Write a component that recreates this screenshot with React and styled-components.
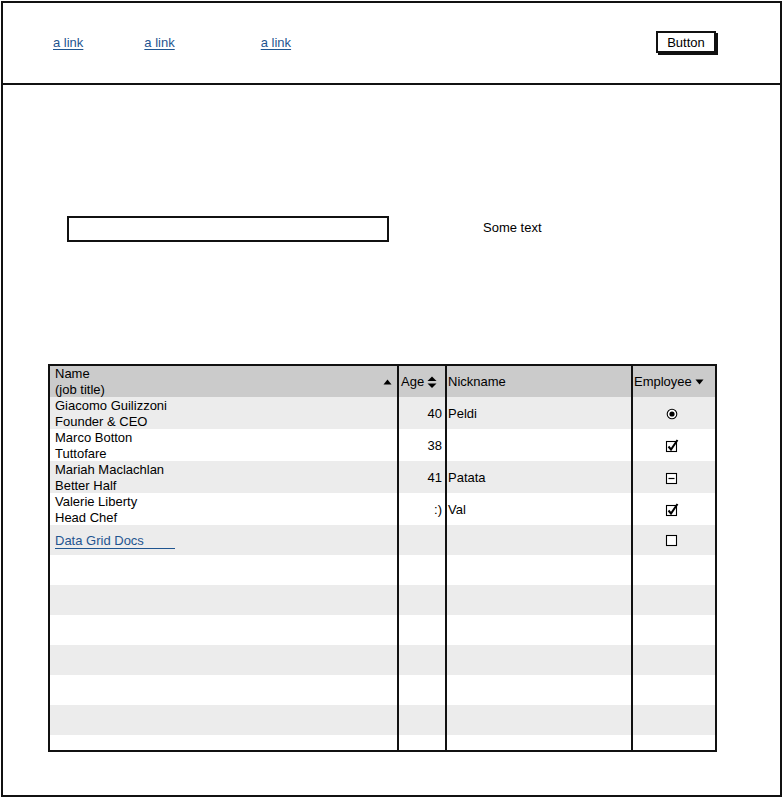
import React from 'react';
import styled, { createGlobalStyle } from 'styled-components';

const GlobalStyle = createGlobalStyle`
  html, body {
    margin: 0;
    padding: 0;
    background: #ffffff;
  }
  body {
    font-family: "Liberation Sans", Arial, sans-serif;
    font-size: 13px;
    color: #000000;
  }
`;

const Frame = styled.div`
  box-sizing: border-box;
  margin: 1px 0 0 1px;
  width: 781px;
  height: 796px;
  border: 2px solid #111111;
  display: flex;
  flex-direction: column;
`;

const TopBar = styled.header`
  box-sizing: border-box;
  height: 82px;
  border-bottom: 2px solid #111111;
  display: flex;
  align-items: center;
  padding: 0 63px 2px 50px;
`;

const NavLink = styled.a`
  color: #1f5590;
  text-decoration: underline;
  text-underline-offset: 2px;
  margin-left: ${p => p.$offset || 0}px;
  cursor: pointer;
`;

const SketchButton = styled.button`
  margin-left: auto;
  box-sizing: border-box;
  width: 60px;
  height: 22px;
  padding: 0;
  border: 2px solid #111111;
  background: #ffffff;
  box-shadow: 2px 2px 0 #111111;
  font-family: "Liberation Sans", Arial, sans-serif;
  font-size: 13px;
  color: #000000;
  margin-right: 1px;
`;

const Body = styled.main`
  display: flex;
  flex-direction: column;
`;

const FormRow = styled.div`
  display: flex;
  align-items: center;
  margin: 131px 0 0 64px;
`;

const TextInput = styled.input`
  box-sizing: border-box;
  width: 322px;
  height: 26px;
  border: 2px solid #111111;
  outline: none;
  background: #ffffff;
`;

const Label = styled.span`
  margin: 0 0 3px 94px;
`;

const Grid = styled.div`
  box-sizing: border-box;
  margin: 122px 0 0 45px;
  width: 669px;
  height: 388px;
  border: 2px solid #111111;
  overflow: hidden;
`;

const Row = styled.div`
  box-sizing: border-box;
  display: grid;
  grid-template-columns: 347px 46px 184px 82px;
  column-gap: 2px;
  height: ${p => p.$h}px;
  background: ${p => p.$bg};
`;

const Cell = styled.div`
  position: relative;
  display: flex;
  align-items: center;
  justify-content: ${p => p.$justify || 'flex-start'};
  padding: ${p => p.$pad || '0'};
  line-height: 16px;
  white-space: nowrap;

  &::after {
    content: '';
    position: absolute;
    top: 0;
    bottom: 0;
    right: -2px;
    width: 2px;
    background: #111111;
  }
  &:last-child::after {
    display: none;
  }
`;

const Stack = styled.div`
  display: flex;
  flex-direction: column;
`;

const HeadLabel = styled.div`
  display: flex;
  align-items: center;
  gap: 3px;
`;

const DocLink = styled.a`
  display: inline-block;
  width: 120px;
  color: #1f5590;
  text-decoration: none;
  border-bottom: 1px solid #1f5590;
  line-height: 15px;
  margin-top: 1px;
`;

const SortUp = () => (
  <svg width="9" height="6" viewBox="0 0 9 6">
    <path d="M0.5 5.5 L4.5 0.5 L8.5 5.5 Z" fill="#000" />
  </svg>
);

const SortDown = () => (
  <svg width="9" height="6" viewBox="0 0 9 6">
    <path d="M0.5 0.5 L4.5 5.5 L8.5 0.5 Z" fill="#000" />
  </svg>
);

const SortBoth = () => (
  <svg width="10" height="13" viewBox="0 0 10 13">
    <path d="M0.5 5 L5 0.5 L9.5 5 Z" fill="#000" />
    <path d="M0.5 7.5 L5 12 L9.5 7.5 Z" fill="#000" />
  </svg>
);

const Radio = () => (
  <svg width="12" height="12" viewBox="0 0 12 12">
    <circle cx="6" cy="6" r="4.8" fill="#fff" stroke="#000" strokeWidth="1.1" />
    <circle cx="6" cy="6" r="2.6" fill="#000" />
  </svg>
);

const Check = () => (
  <svg width="14" height="14" viewBox="0 0 14 14">
    <rect x="1.5" y="2.5" width="10" height="10" fill="#fff" stroke="#000" strokeWidth="1.1" />
    <path d="M3.5 7.5 L6 10.5 L12.5 1" fill="none" stroke="#000" strokeWidth="2" />
  </svg>
);

const Partial = () => (
  <svg width="14" height="14" viewBox="0 0 14 14">
    <rect x="1.5" y="2.5" width="10" height="10" fill="#fff" stroke="#000" strokeWidth="1.1" />
    <path d="M3.5 7.5 L9.5 7.5" stroke="#000" strokeWidth="1.2" />
  </svg>
);

const Empty = () => (
  <svg width="14" height="14" viewBox="0 0 14 14">
    <rect x="1.5" y="2.5" width="10" height="10" fill="#fff" stroke="#000" strokeWidth="1.1" />
  </svg>
);

const people = [
  { name: 'Giacomo Guilizzoni', title: 'Founder & CEO', age: '40', nick: 'Peldi', mark: <Radio /> },
  { name: 'Marco Botton', title: 'Tuttofare', age: '38', nick: '', mark: <Check /> },
  { name: 'Mariah Maclachlan', title: 'Better Half', age: '41', nick: 'Patata', mark: <Partial /> },
  { name: 'Valerie Liberty', title: 'Head Chef', age: ':)', nick: 'Val', mark: <Check /> },
];

const GRAY = '#ececec';
const WHITE = '#ffffff';

const App = () => {
  const blanks = [WHITE, GRAY, WHITE, GRAY, WHITE, GRAY, WHITE];

  return (
    <>
      <GlobalStyle />
      <Frame>
        <TopBar>
          <NavLink>a link</NavLink>
          <NavLink $offset={61}>a link</NavLink>
          <NavLink $offset={86}>a link</NavLink>
          <SketchButton>Button</SketchButton>
        </TopBar>
        <Body>
          <FormRow>
            <TextInput />
            <Label>Some text</Label>
          </FormRow>
          <Grid>
            <Row $h={31} $bg="#cbcbcb">
              <Cell $justify="space-between" $pad="0 5px 0 5px">
                <Stack>
                  <span>Name</span>
                  <span>(job title)</span>
                </Stack>
                <SortUp />
              </Cell>
              <Cell $pad="0 0 0 2px">
                <HeadLabel>
                  Age <SortBoth />
                </HeadLabel>
              </Cell>
              <Cell $pad="0 0 0 1px">Nickname</Cell>
              <Cell $pad="0 0 0 1px">
                <HeadLabel>
                  Employee <SortDown />
                </HeadLabel>
              </Cell>
            </Row>
            {people.map((p, i) => (
              <Row key={p.name} $h={32} $bg={i % 2 === 0 ? GRAY : WHITE}>
                <Cell $pad="1px 0 0 5px">
                  <Stack>
                    <span>{p.name}</span>
                    <span>{p.title}</span>
                  </Stack>
                </Cell>
                <Cell $justify="flex-end" $pad="1px 3px 0 0">{p.age}</Cell>
                <Cell $pad="1px 0 0 1px">{p.nick}</Cell>
                <Cell $justify="center" $pad="0 4px 0 0">{p.mark}</Cell>
              </Row>
            ))}
            <Row $h={30} $bg={GRAY}>
              <Cell $pad="0 0 0 5px">
                <DocLink>Data Grid Docs</DocLink>
              </Cell>
              <Cell />
              <Cell />
              <Cell $justify="center" $pad="0 4px 0 0">
                <Empty />
              </Cell>
            </Row>
            {blanks.map((bg, i) => (
              <Row key={i} $h={30} $bg={bg}>
                <Cell />
                <Cell />
                <Cell />
                <Cell />
              </Row>
            ))}
          </Grid>
        </Body>
      </Frame>
    </>
  );
};

export default App;
